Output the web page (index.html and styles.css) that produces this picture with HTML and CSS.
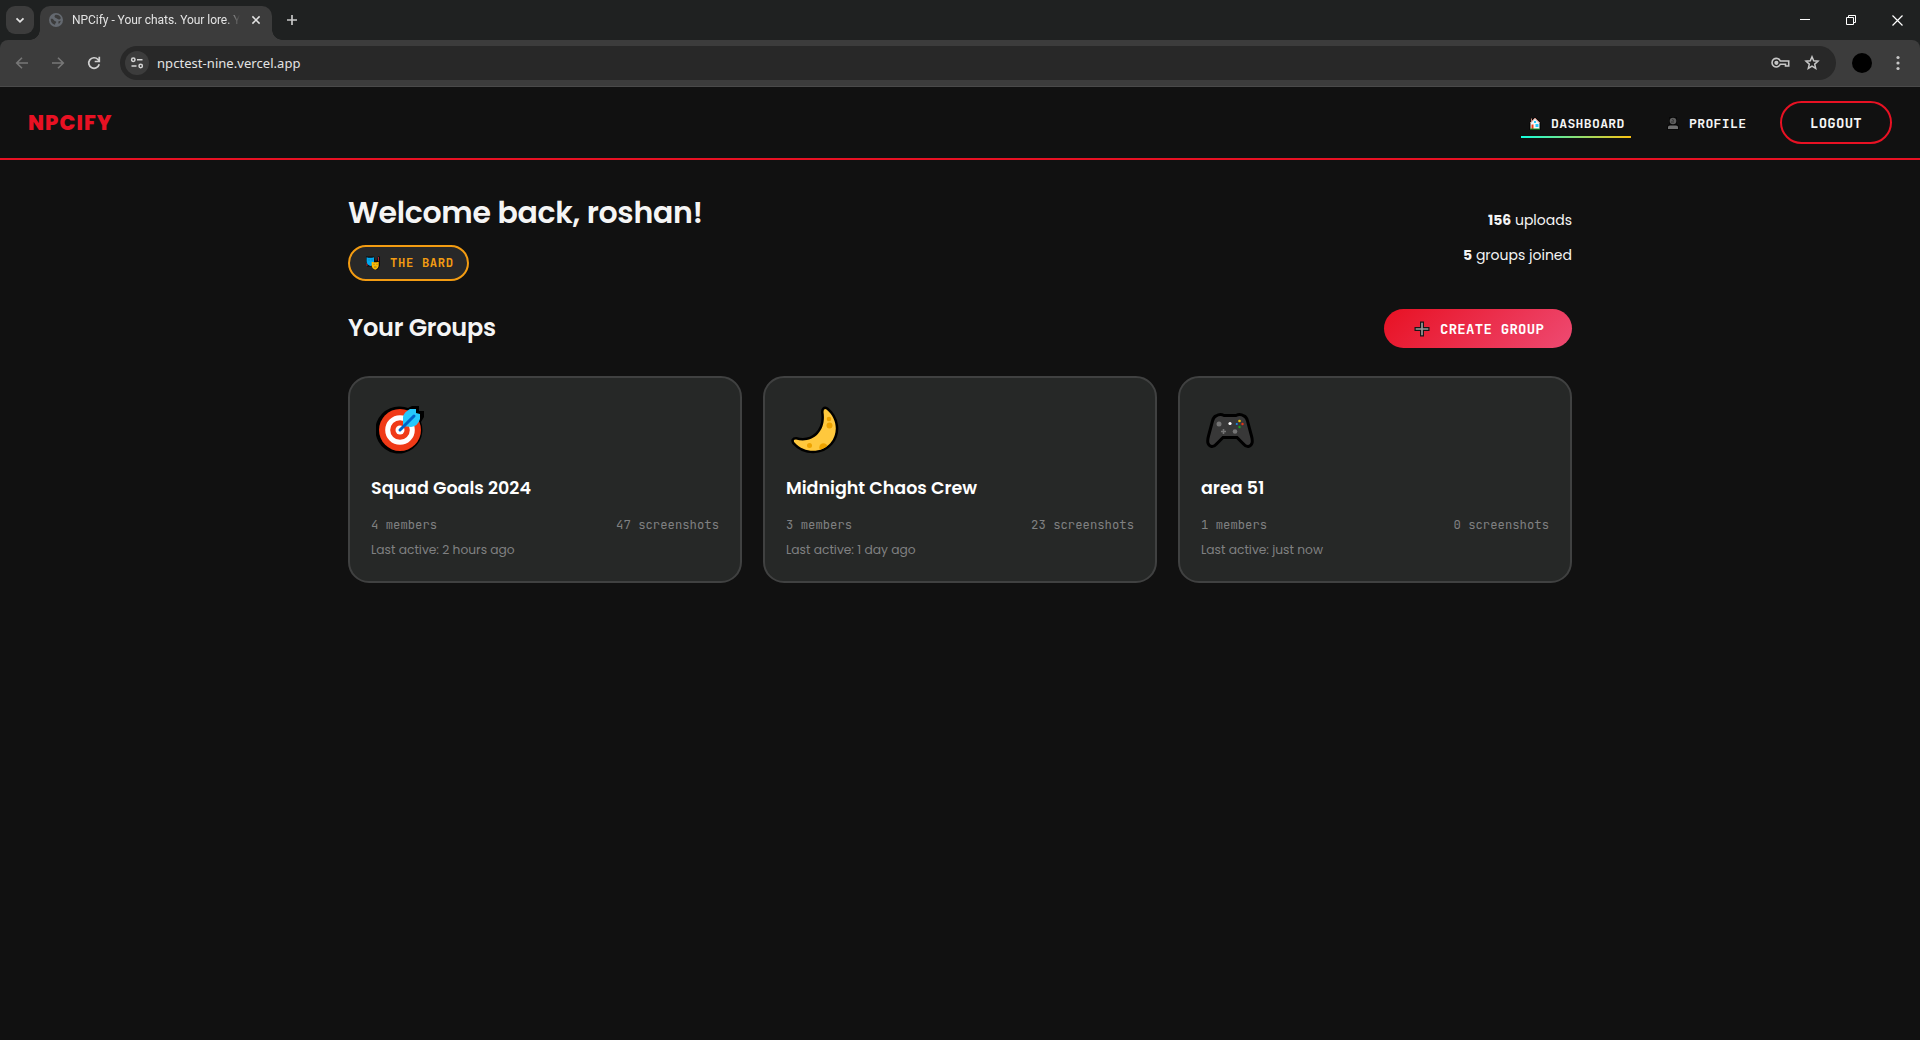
FILE: index.html
```html
<!DOCTYPE html>
<html lang="en">
<head>
<meta charset="utf-8">
<title>NPCify - Your chats. Your lore.</title>
<link rel="stylesheet" href="styles.css">
</head>
<body>
<div class="browser">
  <div class="tabstrip">
    <div class="tab-search"><svg width="28" height="28" fill="none" stroke="#e3e3e3" stroke-width="1.8"><path d="M10.5 12.3l3.5 3.5 3.5-3.5"/></svg></div>
    <div class="tab">
      <svg width="14" height="14" viewBox="0 0 14 14"><circle cx="7" cy="7" r="7" fill="#646970"/><path d="M1.8 5.8C3.5 5.5 4.400 6 5 7.300s2.200.7 2.300 1.700-1.300 1-1.300 2.700C3.500 11.300 1.500 9.300 1.800 5.800zM6.200 2c2.600-.6 4.700.6 5.700 2.900-.8 1.700-2.300 1.900-3.200 1.100S7.200 4.800 6.400 4.700C5.400 4.500 5.200 3 6.200 2zM9.300 8.500l2.400-.7c-.2 1.400-.9 2.400-2 3.100z" fill="#3c3c3c"/></svg>
      <span class="tab-title">NPCify - Your chats. Your lore. Y</span>
      <svg class="tab-close" width="10" height="10" stroke="#e3e3e3" stroke-width="1.5"><path d="M1.400 1.400l7.200 7.200M8.600 1.400L1.400 8.600"/></svg>
    </div>
    <svg class="new-tab" width="12" height="12" stroke="#c7c7c7" stroke-width="1.7"><path d="M6 1v10M1 6h10"/></svg>
    <div class="window-controls">
      <svg width="11" height="12" fill="none" stroke="#fff"><path d="M0 5.500h10"/></svg>
      <svg width="11" height="12" fill="none" stroke="#fff"><path d="M.5 3.500h7v7h-7zM2.500 3.500v-2h7v7h-2"/></svg>
      <svg width="11" height="12" fill="none" stroke="#fff" stroke-width="1.200"><path d="M.5 1.500l10 10M10.500 1.500l-10 10"/></svg>
    </div>
  </div>
  <div class="toolbar">
    <div class="nav-buttons">
      <svg width="14" height="14" fill="none" stroke="#777" stroke-width="1.600"><path d="M13 7H2M7 1.700L1.700 7 7 12.300"/></svg>
      <svg width="14" height="14" fill="none" stroke="#777" stroke-width="1.600"><path d="M1 7h11M7 1.700L12.300 7 7 12.300"/></svg>
      <svg width="14" height="14" fill="none" stroke="#d0d0d0" stroke-width="1.700"><path d="M12.200 8.300A5.300 5.300 0 1 1 11 3.500l1.500 1.700M12.300.8v4.700H7.700"/></svg>
    </div>
    <div class="omnibox">
      <span class="site-info"><svg width="14" height="14" fill="none" stroke="#d5d5d5" stroke-width="1.500"><circle cx="3.300" cy="3.800" r="1.700"/><path d="M7 3.800h5.500M1.500 10h5"/><circle cx="10.700" cy="10" r="1.700"/></svg></span>
      <span class="url">npctest-nine.vercel.app</span>
      <svg class="key" width="19" height="12" fill="none" stroke="#c7c7c7" stroke-width="1.600"><path d="M9.300 4H17.700v5h-3.200V7.300H9.300A4.300 4.300 0 1 1 9.300 4z"/><circle cx="5.400" cy="5.800" r="1.300" fill="#c7c7c7"/></svg>
      <svg width="16" height="16" fill="none" stroke="#c7c7c7" stroke-width="1.500"><path d="M8 1.800l1.700 4 4.300.4-3.300 2.900 1 4.300L8 11.100l-3.700 2.300 1-4.300L2 6.200l4.300-.4z"/></svg>
    </div>
    <span class="avatar"></span>
    <svg width="4" height="16" fill="#c7c7c7"><circle cx="2" cy="2.500" r="1.600"/><circle cx="2" cy="8" r="1.600"/><circle cx="2" cy="13.500" r="1.600"/></svg>
  </div>
</div>

<header class="site-header">
  <div class="brand">NPCIFY</div>
  <nav class="site-nav">
    <a class="nav-link active">
      <svg width="12" height="13" viewBox="0 0 12 13"><path d="M0 6L3 2h1L6 0l6 6v7H0z" fill="#080808"/><path d="M1.500 6L6 1.500 10.500 6v6h-9z" fill="#f4f4f4"/><path d="M1 6l5-5 5 5M2.500 1.500v3" fill="none" stroke="#f0a090" stroke-width=".8"/><path d="M2.500 7.500h2V12h-2z" fill="#f03a17"/><path d="M6.500 7h3v3h-3zM5 4h2v2H5z" fill="#26c9fc"/><path d="M1 12h10" stroke="#16a02c"/></svg>
      DASHBOARD
    </a>
    <a class="nav-link">
      <svg width="12" height="13" viewBox="0 0 12 13"><path d="M2 0h8v7l2 2v4H0V9l2-2z" fill="#080808"/><circle cx="6" cy="4" r="3.300" fill="#5f5f5f"/><path d="M1 12V10q0-1.500 2-1.500h6q2 0 2 1.500v2z" fill="#707070"/><path d="M5 2.500l2 1M4 5h3" stroke="#333"/></svg>
      PROFILE
    </a>
    <button class="logout">LOGOUT</button>
  </nav>
</header>

<main class="dashboard">
  <section class="welcome">
    <div>
      <h1>Welcome back, roshan!</h1>
      <span class="role">
        <svg width="14" height="14" viewBox="0 0 14 14"><path d="M0 .5h8l1 4h2l1-4h2v9l-2 4H8l-2-3H1z" fill="#090909"/><path d="M1 10V7M12.500 1v4" stroke="#b11e28"/><path d="M.6 1.200q3.500 1 7.400 0v4.500q0 3.300-3.500 4.300Q.6 8.800.6 5z" fill="#00a8ef"/><path d="M5.700 5.700q3.500 1 7 0v3.500q0 3.300-3.500 4.500-3.500-1.200-3.500-4.500z" fill="#ffb900"/><path d="M2.500 4h1m2 0h1M7.500 8.300h1m2 0h1M8 11h2.500" stroke="#27515d" stroke-width=".6"/></svg>
        THE BARD
      </span>
    </div>
    <div class="stats">
      <div><b>156</b> uploads</div>
      <div><b>5</b> groups joined</div>
    </div>
  </section>

  <section class="groups-bar">
    <h2>Your Groups</h2>
    <button class="create"><svg width="16" height="16"><path d="M6 .5h4V6h5.500v4H10v5.500H6V10H.5V6H6z" fill="#171717"/><path d="M8 1.700v12.600M1.700 8h12.600" stroke="#9a9a9a" stroke-width="1.700"/></svg>CREATE GROUP</button>
  </section>

  <section class="cards">
    <article class="card">
      <svg class="emoji" width="48" height="48" viewBox="0 0 48 48">
        <path d="M24 .5Q29 .5 32 2L36 0h7v5h5v6l-3 5a23.500 23.500 0 1 1-21-15.500z" fill="#000"/>
        <circle cx="24" cy="24" r="21" fill="#f03a17"/><circle cx="24" cy="24" r="12.300" fill="none" stroke="#fff" stroke-width="5"/><circle cx="24" cy="24" r="4.500" fill="#fff"/>
        <path d="M27 20V11q1-5 7-8h6v4l4 1v5q-2 7-9 8z" fill="#26c9fc"/><path d="M24 24L38 10" stroke="#0063c8" stroke-width="3" stroke-linecap="round"/>
      </svg>
      <h3>Squad Goals 2024</h3>
      <div class="meta"><span>4 members</span><span>47 screenshots</span></div>
      <p>Last active: 2 hours ago</p>
    </article>
    <article class="card">
      <svg class="emoji" width="48" height="48" viewBox="0 0 48 48">
        <defs><clipPath id="moon"><path d="M35.500 3.500C46 12 48 27 39.500 37S14 48 3.500 36.500Q1.500 33.500 5 33.500C22 38 35.500 25 32.500 6Q32.500 2 35.500 3.500z"/></clipPath></defs>
        <path d="M35.500 3.500C46 12 48 27 39.500 37S14 48 3.500 36.500Q1.500 33.500 5 33.500C22 38 35.500 25 32.500 6Q32.500 2 35.500 3.500z" fill="#ffc83d" stroke="#000" stroke-width="5"/>
        <g clip-path="url(#moon)"><path d="M0 0h48v48H0z" fill="#ffc83d"/><g fill="#eea300"><circle cx="38" cy="13" r="2.300"/><circle cx="38.500" cy="19.500" r="3"/><circle cx="18.500" cy="39.500" r="2.500"/><circle cx="32.500" cy="41.500" r="4.200"/></g></g>
      </svg>
      <h3>Midnight Chaos Crew</h3>
      <div class="meta"><span>3 members</span><span>23 screenshots</span></div>
      <p>Last active: 1 day ago</p>
    </article>
    <article class="card">
      <svg class="emoji" width="48" height="48" viewBox="0 0 48 48">
        <path d="M10 10Q14 7.500 18 9.500H30Q34 7.500 38 10Q40.500 11 41.500 15L45.500 30Q48 39 42.500 40.500Q40 41 37 37.500L31 31.500H17L11 37.500Q8 41 5.500 40.500Q0 39 2.500 30L6.500 15Q7.500 11 10 10z" fill="#383838" stroke="#000" stroke-width="3"/>
        <g fill="#757575"><circle cx="13" cy="18" r="2.500"/><circle cx="29" cy="25.500" r="2.300"/><path d="M16.700 23h1.600v1.700H20v1.600h-1.700V28h-1.600v-1.700H15v-1.600h1.700z"/></g><circle cx="24" cy="17.500" r="1.600" fill="#fff"/>
        <circle cx="33.500" cy="15" r="1.300" fill="#f3c500"/><circle cx="30.800" cy="18" r="1.100" fill="#1688e8"/><circle cx="36.500" cy="18" r="1.200" fill="#e83217"/><circle cx="33.500" cy="21" r="1.200" fill="#16a51a"/>
      </svg>
      <h3>area 51</h3>
      <div class="meta"><span>1 members</span><span>0 screenshots</span></div>
      <p>Last active: just now</p>
    </article>
  </section>
</main>
</body>
</html>
```
FILE: styles.css
```css
* { box-sizing: border-box; margin: 0; }
body {
  min-height: 1040px;
  background: #111;
  color: #f5f5f5;
  font-family: Poppins, Inter, sans-serif;
}
svg { display: block; flex: none; }

/* Browser frame */
.browser { height: 87px; background: #1f2121; font-family: "Noto Sans", sans-serif; }
.tabstrip { display: flex; height: 40px; padding: 6px 17px 0 6px; }
.tab-search { width: 28px; height: 28px; border-radius: 9px; background: #3c3c3c; }
.tab {
  position: relative;
  display: flex;
  align-items: center;
  width: 232px;
  height: 34px;
  margin-left: 6px;
  padding: 0 11px 6px 9px;
  border-radius: 10px 10px 0 0;
  background: #3c3c3c;
}
.tab::before, .tab::after {
  content: "";
  position: absolute;
  bottom: 0;
  width: 10px;
  height: 10px;
}
.tab::before { left: -10px; background: radial-gradient(circle at 0 0, transparent 9.5px, #3c3c3c 10px); }
.tab::after { right: -10px; background: radial-gradient(circle at 100% 0, transparent 9.5px, #3c3c3c 10px); }
.tab-title {
  width: 170px;
  margin-left: 9px;
  white-space: nowrap;
  font: 12px/18px Roboto, sans-serif;
  letter-spacing: -.04px;
  color: #e3e3e3;
  -webkit-mask-image: linear-gradient(90deg, #000 154px, transparent 168px);
  mask-image: linear-gradient(90deg, #000 154px, transparent 168px);
}
.tab-close { margin-left: auto; }
.new-tab { margin: 8px 0 0 14px; }
.window-controls { display: flex; gap: 35px; margin: 8px 0 0 auto; }
.toolbar {
  display: flex;
  align-items: center;
  height: 47px;
  padding: 0 20px 1px 15px;
  border-bottom: 1px solid #4a4a4a;
  border-radius: 8px 8px 0 0;
  background: #3c3c3c;
}
.nav-buttons { display: flex; gap: 22px; width: 105px; }
.omnibox {
  display: flex;
  align-items: center;
  flex: 1;
  height: 34px;
  padding: 0 16px 0 5px;
  border-radius: 17px;
  background: #282828;
}
.site-info {
  display: grid;
  place-items: center;
  width: 24px;
  height: 24px;
  border-radius: 50%;
  background: #3c3c3c;
}
.url { flex: 1; margin-left: 8px; font-size: 13px; line-height: 20px; letter-spacing: .05px; color: #e3e3e3; }
.key { margin-right: 14px; }
.avatar { width: 20px; height: 20px; margin: 0 24px 0 16px; border-radius: 50%; background: #000; }

/* Site header */
.site-header {
  display: flex;
  align-items: center;
  justify-content: space-between;
  height: 73px;
  padding: 0 28px;
  border-bottom: 2px solid #e81123;
}
.brand { font-size: 21px; font-weight: 800; letter-spacing: 1.05px; color: #e81123; }
.site-nav { display: flex; align-items: center; font-family: "JetBrains Mono", "DejaVu Sans Mono", monospace; }
.nav-link {
  display: flex;
  align-items: center;
  gap: 10px;
  width: 110px;
  height: 31px;
  padding: 4px 0 0 8px;
  border-bottom: 2px solid transparent;
  font-size: 13.125px;
  font-weight: 600;
  letter-spacing: .33px;
  margin-right: 28px;
}
.nav-link:not(.active) { width: 93px; }
.nav-link.active { border-image: linear-gradient(90deg, #12ffe0, #ffc20e) 1; }
.logout {
  width: 112px;
  height: 43px;
  border: 2px solid #e81123;
  border-radius: 21.5px;
  background: none;
  color: #f5f5f5;
  font: 700 14px "JetBrains Mono", "DejaVu Sans Mono", monospace;
  letter-spacing: .28px;
}

/* Dashboard */
.dashboard { width: 1224px; margin: 0 auto; padding-top: 32px; }
.welcome { display: flex; justify-content: space-between; }
h1 { padding-top: 1px; font-size: 30px; font-weight: 600; line-height: 39px; letter-spacing: -.3px; }
.role {
  display: flex;
  align-items: center;
  gap: 10px;
  width: 121px;
  height: 36px;
  margin-top: 13px;
  padding-left: 16px;
  border: 2px solid #f39c12;
  border-radius: 18px;
  background: #282828;
  color: #f39c12;
  font: 600 12.25px "JetBrains Mono", "DejaVu Sans Mono", monospace;
  letter-spacing: .62px;
  white-space: nowrap;
}
.stats { padding-top: 11px; font-size: 14px; line-height: 35px; text-align: right; }
.stats b { font-weight: 700; }
.groups-bar { display: flex; justify-content: space-between; margin-top: 28px; }
h2 { font-size: 24px; font-weight: 600; line-height: 37px; letter-spacing: -.24px; }
.create {
  display: flex;
  align-items: center;
  gap: 10px;
  width: 188px;
  height: 39px;
  padding: 0 0 0 30px;
  border: 0;
  border-radius: 19.5px;
  background: linear-gradient(135deg, #e81123, #ee4a72);
  color: #fff;
  font: 700 14px "JetBrains Mono", "DejaVu Sans Mono", monospace;
  letter-spacing: .28px;
  white-space: nowrap;
}
.cards { display: grid; grid-template-columns: repeat(3, 1fr); gap: 21px; margin-top: 28px; }
.card {
  height: 207px;
  padding: 21px;
  border: 2px solid #404141;
  border-radius: 21px;
  background: #262827;
}
.emoji { margin: 7px 0 21px 5px; }
h3 { font-size: 17.5px; font-weight: 600; line-height: 27px; color: #fff; }
.meta {
  display: flex;
  justify-content: space-between;
  margin-top: 13px;
  font: 12.25px/20px "JetBrains Mono", "DejaVu Sans Mono", monospace;
  color: #808182;
}
.card p { margin-top: 5px; font-size: 12.25px; line-height: 20px; color: #808182; }
```
